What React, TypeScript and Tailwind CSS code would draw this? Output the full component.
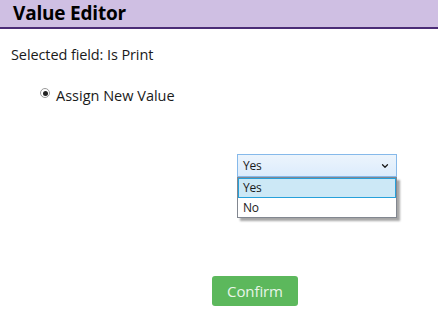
import { ChevronDown } from "lucide-react";

export default function App() {
  return (
    <div
      className="flex h-[334px] w-[438px] flex-col bg-white text-[#1a1a1a]"
      style={{ fontFamily: '"Open Sans", "Noto Sans", sans-serif' }}
    >
      {/* Header */}
      <header className="flex h-[29px] items-center border-b-2 border-[#4b2c77] bg-[#cfbfe3] pl-[13px]">
        <h1 className="text-[19px] font-bold leading-none tracking-[-0.2px] text-black">Value Editor</h1>
      </header>

      <div className="flex flex-1 flex-col">
        <p className="mt-[16px] pl-[11px] text-[14.5px] leading-[20px] tracking-[-0.1px]">Selected field: Is Print</p>

        <label className="mt-[21px] flex items-center gap-[6px] pl-[40px]">
          <span className="-mt-[6px] flex h-[10px] w-[10px] items-center justify-center rounded-full border border-[#9a9a9a] bg-white">
            <span className="h-[5px] w-[5px] rounded-full bg-[#222]" />
          </span>
          <span className="text-[14.5px] leading-[20px]">Assign New Value</span>
        </label>

        {/* Select with open list */}
        <div className="relative ml-[237px] mt-[48px] w-[160px]">
          <div className="flex h-[23px] items-center justify-between border border-[#86b9ea] bg-gradient-to-b from-[#ecf4fc] to-[#dcecfc] pl-[5px] pr-[6px] text-[12px] tracking-[-0.2px]">
            <span>Yes</span>
            <ChevronDown className="size-[10px]" strokeWidth={3} />
          </div>
          <div className="absolute left-0 top-[23px] w-[160px] border border-[#828790] bg-white text-[12px] tracking-[-0.2px] shadow-[3px_3px_2px_rgba(0,0,0,0.35)]">
            <div className="flex h-[20px] items-center border border-[#26a0da] bg-[#cce8f6] pl-[4px]">Yes</div>
            <div className="flex h-[19px] items-center pl-[5px]">No</div>
          </div>
        </div>

        <div className="mt-[99px] flex pl-[212px]">
          <button className="flex h-[30px] w-[86px] items-center justify-center rounded-[3px] bg-[#5cb85c] text-[15px] tracking-[-0.1px] text-[#e8f5e8]">
            Confirm
          </button>
        </div>
      </div>
    </div>
  );
}
